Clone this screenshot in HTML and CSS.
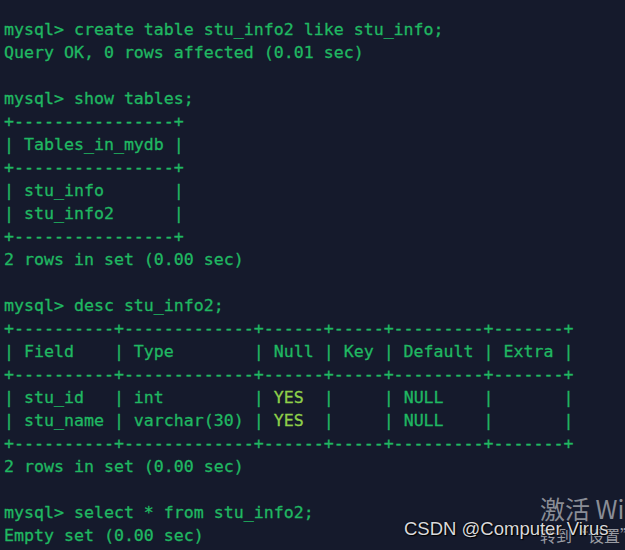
FILE: index.html
```html
<!DOCTYPE html>
<html>
<head>
<meta charset="utf-8">
<link rel="stylesheet" href="styles.css">
</head>
<body>
<div class="term">
<pre class="out">mysql&gt; create table stu_info2 like stu_info;
Query OK, 0 rows affected (0.01 sec)

mysql&gt; show tables;
+----------------+
| Tables_in_mydb |
+----------------+
| stu_info       |
| stu_info2      |
+----------------+
2 rows in set (0.00 sec)

mysql&gt; desc stu_info2;
+----------+-------------+------+-----+---------+-------+
| Field    | Type        | Null | Key | Default | Extra |
+----------+-------------+------+-----+---------+-------+
| stu_id   | int         | <span class="yes">YES</span>  |     | NULL    |       |
| stu_name | varchar(30) | <span class="yes">YES</span>  |     | NULL    |       |
+----------+-------------+------+-----+---------+-------+
2 rows in set (0.00 sec)

mysql&gt; select * from stu_info2;
Empty set (0.00 sec)</pre>
<div class="activate">
<div class="act-title">激活 Windows</div>
<div class="act-sub">转到“设置”以激活 Windows。</div>
</div>
<div class="mark">CSDN @Computer Virus</div>
</div>
</body>
</html>
```
FILE: styles.css
```css
html, body {
  margin: 0;
  padding: 0;
  background: #151a2c;
}
.term {
  position: relative;
  width: 625px;
  height: 550px;
  overflow: hidden;
  background: #151a2c;
}
.out {
  margin: 0;
  padding: 18px 0 0 4px;
  font-family: "DejaVu Sans Mono", "Liberation Mono", monospace;
  font-size: 16.6px;
  line-height: 23px;
  color: #20b862;
  -webkit-text-stroke: 0.3px #20b862;
  white-space: pre;
}
.yes {
  color: #8fd14a;
  -webkit-text-stroke: 0.3px #8fd14a;
}
.activate {
  position: absolute;
  left: 540px;
  top: 492px;
  color: #8a8d96;
  font-family: "Noto Sans CJK SC", "Noto Sans", sans-serif;
  white-space: nowrap;
}
.act-title {
  font-size: 25px;
  line-height: 32px;
}
.act-sub {
  font-size: 16px;
  line-height: 22px;
  color: #9a9ca3;
}
.mark {
  position: absolute;
  left: 404px;
  top: 518px;
  font-family: "Liberation Sans", Arial, sans-serif;
  font-size: 18.5px;
  line-height: 22px;
  color: #d9d9dc;
  text-shadow: 0 0 2px #000, 1px 1px 1px #000;
  white-space: nowrap;
}
```
